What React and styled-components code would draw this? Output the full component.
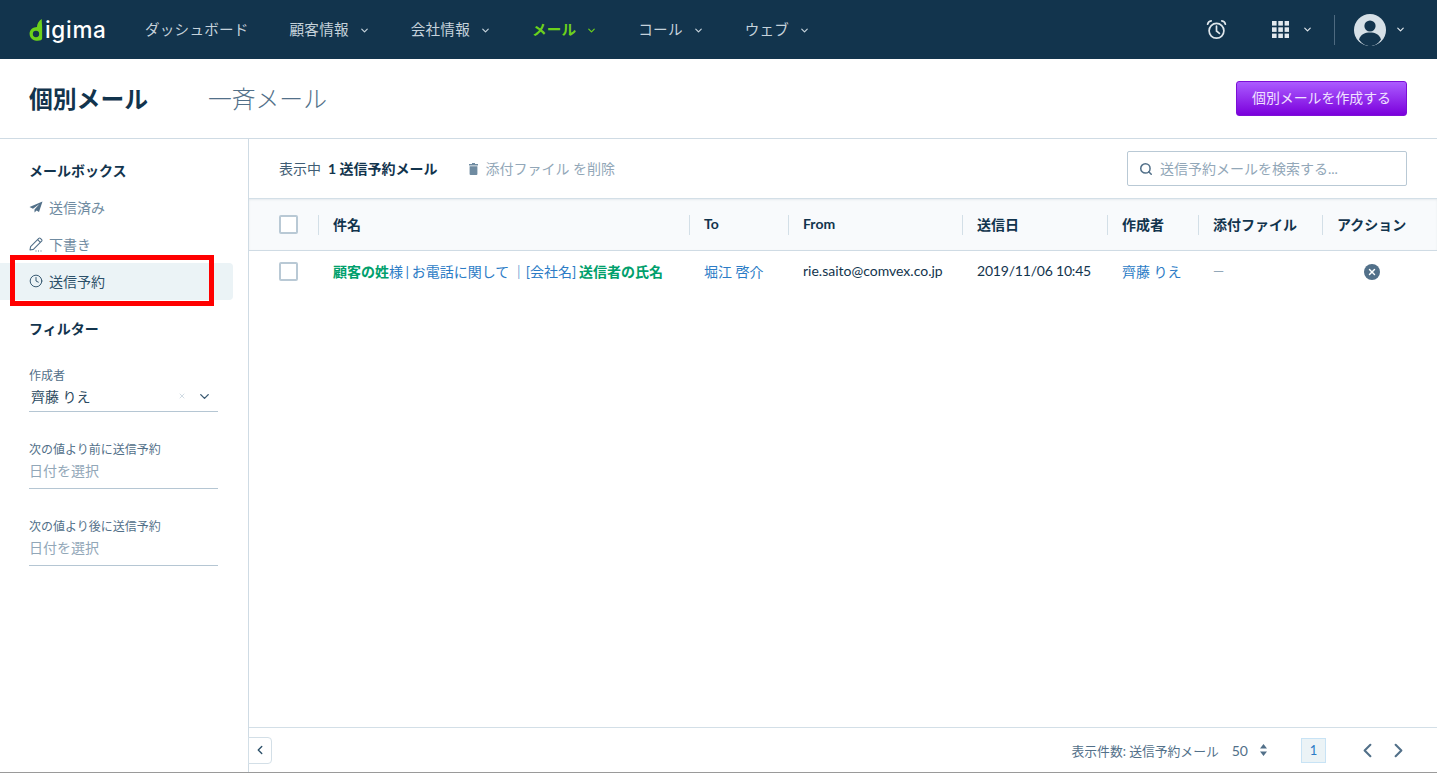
import React from 'react';
import styled, { createGlobalStyle } from 'styled-components';
import { ChevronDown, ChevronLeft, ChevronRight, Search, Clock, X } from 'lucide-react';

const GlobalStyle = createGlobalStyle`
  * { box-sizing: border-box; }
  html, body { margin: 0; padding: 0; }
  body {
    font-family: Lato, "Noto Sans CJK JP", sans-serif;
    color: #12344d;
    background: #fff;
    overflow: hidden;
  }
`;

const COLUMNS = '69px 371px 99px 174px 145px 91px 124px 1fr';

const Page = styled.div`
  position: relative;
  width: 1437px;
  height: 773px;
  display: flex;
  flex-direction: column;
  border-bottom: 1px solid #9a9a9a;
`;

const Nav = styled.header`
  height: 59px;
  flex: none;
  background: #12344d;
  display: flex;
  align-items: center;
  padding: 0 31px 0 29px;
`;

const Logo = styled.div`
  display: flex;
  align-items: center;
  width: 116px;
  height: 59px;
  color: #fff;
  font-family: Inter, sans-serif;
  font-size: 22.5px;
  font-weight: 500;
  letter-spacing: 0.7px;
  padding-bottom: 1px;
`;

const NavItem = styled.div`
  display: flex;
  align-items: center;
  gap: 10px;
  margin-right: ${(p) => p.$gap}px;
  padding-bottom: 3px;
  font-size: 14.6px;
  letter-spacing: 0.2px;
  font-weight: ${(p) => (p.$active ? 700 : 400)};
  color: ${(p) => (p.$active ? '#6cd11b' : '#c5d2db')};
  svg { margin-top: 5px; }
`;

const NavRight = styled.div`
  margin-left: auto;
  display: flex;
  align-items: center;
  color: #dfe6eb;
`;

const NavDivider = styled.div`
  width: 1px;
  height: 30px;
  background: #4e6a80;
  margin: 0 19px 0 21px;
`;

const TitleBar = styled.div`
  height: 80px;
  flex: none;
  display: flex;
  align-items: center;
  padding: 0 30px 0 29px;
  border-bottom: 1px solid #cfdbe4;
`;

const TitleTab = styled.div`
  font-size: 23.8px;
  line-height: 32px;
  margin-right: 60px;
  font-weight: ${(p) => (p.$active ? 700 : 300)};
  color: ${(p) => (p.$active ? '#12344d' : '#527089')};
`;

const PrimaryButton = styled.button`
  margin-left: auto;
  width: 171px;
  height: 35px;
  padding: 0 0 3px;
  border: 1px solid #7c0fd6;
  border-radius: 3px;
  background: linear-gradient(#ab5cff, #7b00dc);
  color: #f0e2ff;
  font: 400 13.9px Lato, "Noto Sans CJK JP", sans-serif;
`;

const Body = styled.div`
  flex: 1;
  min-height: 0;
  display: flex;
`;

const Sidebar = styled.aside`
  width: 249px;
  flex: none;
  border-right: 1px solid #cfdbe4;
  padding: 21px 15px 0 0;
`;

const SideTitle = styled.h3`
  margin: 0 0 0 29px;
  font-size: 14px;
  line-height: 21px;
  font-weight: 700;
  color: #12344d;
`;

const SideList = styled.div`
  margin: 8px 0 18px;
  display: flex;
  flex-direction: column;
`;

const SideItem = styled.div`
  height: 37px;
  display: flex;
  align-items: center;
  gap: 6px;
  padding: 0 0 1px 29px;
  font-size: 14px;
  border-radius: 0 4px 4px 0;
  color: ${(p) => (p.$active ? '#2c5069' : '#6f8ba1')};
  background: ${(p) => (p.$active ? '#ebf3f6' : 'transparent')};
  svg { color: ${(p) => (p.$active ? '#2c5069' : '#527089')}; }
`;

const Filters = styled.div`
  padding: 29px 15px 0 29px;
  display: flex;
  flex-direction: column;
  gap: 29px;
`;

const Field = styled.div`
  width: 189px;
  height: ${(p) => (p.$compact ? 44 : 48)}px;
  padding-top: ${(p) => (p.$compact ? 0 : 1)}px;
  border-bottom: 1px solid #b5c6d3;
`;

const FieldLabel = styled.div`
  font-size: 12px;
  line-height: 16px;
  color: #527089;
`;

const FieldValue = styled.div`
  display: flex;
  align-items: center;
  height: 24px;
  font-size: 14px;
  padding-left: ${(p) => (p.$filled ? 2 : 0)}px;
  color: ${(p) => (p.$filled ? '#2c4a60' : '#92a7b8')};
`;

const FieldIcons = styled.div`
  margin-left: auto;
  display: flex;
  align-items: center;
  gap: 11px;
  padding-right: 6px;
  color: #3a5a72;
`;

const Main = styled.main`
  flex: 1;
  min-width: 0;
  display: flex;
  flex-direction: column;
`;

const Toolbar = styled.div`
  height: 59px;
  flex: none;
  display: flex;
  align-items: center;
  padding: 0 30px;
  font-size: 14px;
  color: #3f5d74;
`;

const ToolbarText = styled.span`
  padding-bottom: 2px;
`;

const Showing = styled.strong`
  margin-left: 7px;
  padding-bottom: 2px;
  color: #12344d;
  font-weight: 700;
`;

const DeleteAction = styled.div`
  margin-left: 31px;
  display: flex;
  align-items: center;
  gap: 8px;
  color: #92a7b8;
  svg { color: #6f8ba1; }
`;

const SearchBox = styled.div`
  margin-left: auto;
  width: 280px;
  height: 35px;
  display: flex;
  align-items: center;
  gap: 7px;
  padding-left: 11px;
  border: 1px solid #b9c9d5;
  border-radius: 2px;
  font-size: 14px;
  color: #92a7b8;
  svg { color: #527089; }
`;

const TableHead = styled.div`
  height: 53px;
  flex: none;
  display: grid;
  grid-template-columns: ${COLUMNS};
  align-items: center;
  background: #f8fafc;
  border-top: 1px solid #d3dfe7;
  border-bottom: 1px solid #cfdbe4;
  box-shadow: inset 0 1px 2px rgba(18, 52, 77, 0.08);
`;

const HeadCell = styled.div`
  height: 20px;
  display: flex;
  align-items: center;
  padding: 0 0 2px 14px;
  font-size: 14px;
  font-weight: 700;
  color: #12344d;
  white-space: nowrap;
  border-left: 1px solid #d3dfe7;
`;

const CheckCell = styled.div`
  display: flex;
  align-items: center;
  padding-left: 30px;
`;

const Checkbox = styled.span`
  width: 19px;
  height: 19px;
  border: 2px solid #b9c9d5;
  border-radius: 2px;
  background: #fff;
`;

const Row = styled.div`
  height: 41px;
  flex: none;
  display: grid;
  grid-template-columns: ${COLUMNS};
  align-items: center;
`;

const Cell = styled.div`
  padding: 0 0 2px 15px;
  font-size: 14px;
  white-space: nowrap;
  color: ${(p) => p.$color || '#12344d'};
`;

const SubjectCell = styled(Cell)`
  word-spacing: -1px;
`;

const DateCell = styled(Cell)`
  letter-spacing: -0.2px;
`;

const Token = styled.b`
  color: #00a06c;
  font-weight: 700;
`;

const ActionCell = styled.div`
  display: flex;
  padding-left: 42px;
`;

const RemoveIcon = styled.span`
  width: 16px;
  height: 16px;
  border-radius: 50%;
  background: #527089;
  color: #fff;
  display: flex;
  align-items: center;
  justify-content: center;
`;

const Spacer = styled.div`
  flex: 1;
`;

const Footer = styled.footer`
  position: relative;
  height: 45px;
  flex: none;
  display: flex;
  align-items: center;
  padding-right: 27px;
  border-top: 1px solid #d3dfe7;
  font-size: 12.8px;
  color: #527089;
`;

const Collapse = styled.button`
  width: 24px;
  height: 27px;
  margin-left: -1px;
  padding: 0;
  display: flex;
  align-items: center;
  justify-content: center;
  background: #fff;
  border: 1px solid #d3dfe7;
  border-radius: 0 4px 4px 0;
  color: #2c5069;
`;

const PerPage = styled.div`
  margin-left: auto;
  display: flex;
  align-items: center;
`;

const PerPageValue = styled.span`
  margin-left: 13px;
  font-size: 14px;
`;

const Sorter = styled.svg`
  margin: 0 0 0 12px;
`;

const PageNumber = styled.div`
  width: 25px;
  height: 25px;
  margin-left: 34px;
  display: flex;
  align-items: center;
  justify-content: center;
  background: #ebf3f6;
  border: 1px solid #c8e3f5;
  color: #2c7cc6;
  font-size: 13px;
`;

const Pager = styled.div`
  margin-left: 30px;
  display: flex;
  gap: 8px;
  color: #527089;
`;

const Annotation = styled.div`
  position: absolute;
  left: 10px;
  top: 255px;
  width: 204px;
  height: 51px;
  border: 5px solid #ff0000;
  pointer-events: none;
`;

function LogoMark() {
  return (
    <svg width="14" height="23" viewBox="0 0 14 24" style={{ marginRight: 2 }}>
      <path
        fill="#6cd11b"
        fillRule="evenodd"
        d="M13 1 C13 5 13.4 7 13.4 10 V21.5 C13.4 25 0.5 25.5 0.3 16.5 C0.2 12 4 9.5 8 9.3 C8 6 10 3 13 1 Z M7 13.4 A3.3 3.3 0 1 0 7 20 A3.3 3.3 0 1 0 7 13.4 Z"
      />
    </svg>
  );
}

function Alarm() {
  return (
    <svg width="21" height="21" viewBox="0 0 21 21" fill="none" stroke="currentColor" strokeWidth="1.7" style={{ marginRight: 45 }}>
      <circle cx="10.5" cy="11.8" r="7.4" />
      <path d="M10.5 7.2 V12 L13.4 14.4" strokeLinecap="round" />
      <path d="M1.6 5.2 C2 3.4 3.4 2.2 5.2 1.9" strokeLinecap="round" />
      <path d="M19.4 5.2 C19 3.4 17.6 2.2 15.8 1.9" strokeLinecap="round" />
    </svg>
  );
}

function Grid() {
  const dots = [];
  for (let y = 0; y < 3; y++) {
    for (let x = 0; x < 3; x++) {
      dots.push(<rect key={`${x}${y}`} x={x * 6.3} y={y * 6.3} width="4.6" height="4.6" fill="#e3e9ee" />);
    }
  }
  return <svg width="17" height="17" viewBox="0 0 17 17">{dots}</svg>;
}

function Avatar() {
  return (
    <svg width="32" height="32" viewBox="0 0 32 32">
      <circle cx="16" cy="16" r="16" fill="#d6e0e7" />
      <circle cx="16" cy="12" r="5.6" fill="#12344d" />
      <path d="M5 25.5 C7 20 11 18.6 16 18.6 C21 18.6 25 20 27 25.5 C24 30 20 32 16 32 C12 32 8 30 5 25.5 Z" fill="#12344d" />
    </svg>
  );
}

function PaperPlane() {
  return (
    <svg width="14" height="14" viewBox="0 0 14 14">
      <path fill="currentColor" d="M13.5 1.5 L0.5 7 L4 8.8 L10.5 4 L5.5 9.6 L5.5 12.5 L7.6 10.6 L10 12 Z" />
    </svg>
  );
}

function Pencil() {
  return (
    <svg width="14" height="15" viewBox="0 0 14 15" fill="none" stroke="currentColor" strokeWidth="1.1">
      <path d="M1 13 L1.6 9.6 L9.8 1.4 Q10.6 0.7 11.4 1.4 L12.6 2.6 Q13.3 3.4 12.6 4.2 L4.4 12.4 Z" strokeLinejoin="round" />
      <path d="M8.6 2.6 L11.4 5.4" />
      <path d="M6.5 14 H7.5 M9 14 H10 M11.5 14 H12.5" />
    </svg>
  );
}

function TrashFilled() {
  return (
    <svg width="9" height="12" viewBox="0 0 9 12">
      <path fill="currentColor" d="M3 0 H6 V1 H9 V2.4 H0 V1 H3 Z M0.6 3.2 H8.4 V11 Q8.4 12 7.4 12 H1.6 Q0.6 12 0.6 11 Z" />
    </svg>
  );
}

const navItems = [
  { label: 'ダッシュボード', gap: 41 },
  { label: '顧客情報', gap: 41, menu: true },
  { label: '会社情報', gap: 41, menu: true },
  { label: 'メール', gap: 41, menu: true, active: true },
  { label: 'コール', gap: 41, menu: true },
  { label: 'ウェブ', gap: 0, menu: true },
];

const columns = ['件名', 'To', 'From', '送信日', '作成者', '添付ファイル', 'アクション'];

const LINK = '#2c7cc6';

export default function App() {
  return (
    <Page>
      <GlobalStyle />
      <Nav>
        <Logo>
          <LogoMark />
          igima
        </Logo>
        {navItems.map((item) => (
          <NavItem key={item.label} $gap={item.gap} $active={item.active}>
            {item.label}
            {item.menu && <ChevronDown size={11} strokeWidth={2.6} />}
          </NavItem>
        ))}
        <NavRight>
          <Alarm />
          <Grid />
          <ChevronDown size={11} strokeWidth={2.6} style={{ marginLeft: 13 }} />
          <NavDivider />
          <Avatar />
          <ChevronDown size={11} strokeWidth={2.6} style={{ marginLeft: 9 }} />
        </NavRight>
      </Nav>
      <TitleBar>
        <TitleTab $active>個別メール</TitleTab>
        <TitleTab>一斉メール</TitleTab>
        <PrimaryButton>個別メールを作成する</PrimaryButton>
      </TitleBar>
      <Body>
        <Sidebar>
          <SideTitle>メールボックス</SideTitle>
          <SideList>
            <SideItem><PaperPlane />送信済み</SideItem>
            <SideItem><Pencil />下書き</SideItem>
            <SideItem $active><Clock size={14} strokeWidth={1.6} />送信予約</SideItem>
          </SideList>
          <SideTitle>フィルター</SideTitle>
          <Filters>
            <Field $compact>
              <FieldLabel>作成者</FieldLabel>
              <FieldValue $filled>
                齊藤 りえ
                <FieldIcons>
                  <X size={8} color="#b9c9d5" strokeWidth={2} />
                  <ChevronDown size={15} strokeWidth={2.2} />
                </FieldIcons>
              </FieldValue>
            </Field>
            <Field>
              <FieldLabel>次の値より前に送信予約</FieldLabel>
              <FieldValue>日付を選択</FieldValue>
            </Field>
            <Field>
              <FieldLabel>次の値より後に送信予約</FieldLabel>
              <FieldValue>日付を選択</FieldValue>
            </Field>
          </Filters>
        </Sidebar>
        <Main>
          <Toolbar>
            <ToolbarText>表示中</ToolbarText>
            <Showing>1 送信予約メール</Showing>
            <DeleteAction>
              <TrashFilled />
              <ToolbarText>添付ファイル を削除</ToolbarText>
            </DeleteAction>
            <SearchBox>
              <Search size={14} strokeWidth={2.6} />
              <ToolbarText>送信予約メールを検索する...</ToolbarText>
            </SearchBox>
          </Toolbar>
          <TableHead>
            <CheckCell><Checkbox /></CheckCell>
            {columns.map((name) => (
              <HeadCell key={name}>{name}</HeadCell>
            ))}
          </TableHead>
          <Row>
            <CheckCell><Checkbox /></CheckCell>
            <SubjectCell $color={LINK}>
              <Token>顧客の姓</Token>様 | お電話に関して ｜[会社名] <Token>送信者の氏名</Token>
            </SubjectCell>
            <Cell $color={LINK}>堀江 啓介</Cell>
            <Cell>rie.saito@comvex.co.jp</Cell>
            <DateCell>2019/11/06 10:45</DateCell>
            <Cell $color={LINK}>齊藤 りえ</Cell>
            <Cell $color="#92a7b8">—</Cell>
            <ActionCell>
              <RemoveIcon><X size={10} strokeWidth={3.4} /></RemoveIcon>
            </ActionCell>
          </Row>
          <Spacer />
          <Footer>
            <Collapse><ChevronLeft size={14} strokeWidth={2.4} /></Collapse>
            <PerPage>
              表示件数: 送信予約メール
              <PerPageValue>50</PerPageValue>
              <Sorter width="7" height="12" viewBox="0 0 7 12">
                <path fill="currentColor" d="M3.5 0 L7 4.6 H0 Z M3.5 12 L0 7.4 H7 Z" />
              </Sorter>
            </PerPage>
            <PageNumber>1</PageNumber>
            <Pager>
              <ChevronLeft size={23} strokeWidth={2.2} />
              <ChevronRight size={23} strokeWidth={2.2} />
            </Pager>
          </Footer>
        </Main>
      </Body>
      <Annotation />
    </Page>
  );
}
